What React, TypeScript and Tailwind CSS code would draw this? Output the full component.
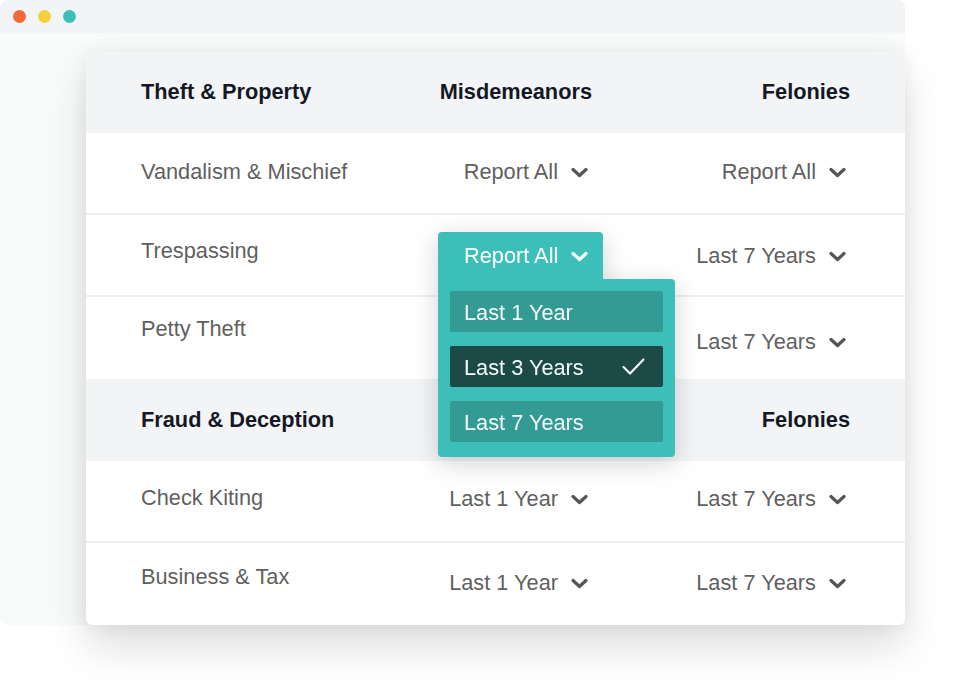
import React from 'react';

const font = { fontFamily: '"Liberation Sans", Arial, sans-serif' };

function Chevron({ white = false }: { white?: boolean }) {
  return (
    <svg width="17" height="11" viewBox="0 0 17 11" className={white ? 'text-white' : 'text-[#555555]'}>
      <path d="M2 2.5l6.5 6 6.5-6" fill="none" stroke="currentColor" strokeWidth="3.2" strokeLinecap="round" strokeLinejoin="round" />
    </svg>
  );
}

function Value({ label }: { label: string }) {
  return (
    <div className="flex items-center justify-end gap-[13px] pr-[4px] text-[21.75px] text-[#5f5f5f]">
      <span>{label}</span>
      <Chevron />
    </div>
  );
}

type Row = { name: string; mis: string | null; fel: string; nameTop: number; valTop: number };

function HeaderRow({ title, first = false }: { title: string; first?: boolean }) {
  return (
    <div className={`grid grid-cols-[1fr_200px_258px] items-center px-[55px] bg-[#f3f4f6] text-[21.75px] font-bold text-[#141824] ${first ? 'h-[81px] rounded-t-[6px]' : 'h-[82px]'}`}>
      <div>{title}</div>
      <div className="text-right">{first ? 'Misdemeanors' : ''}</div>
      <div className="text-right">Felonies</div>
    </div>
  );
}

function DataRow({ row, last = false }: { row: Row; last?: boolean }) {
  return (
    <div className={`grid grid-cols-[1fr_200px_258px] px-[55px] h-[82px] ${last ? '' : 'border-b-2 border-[#f0f0f0]'}`}>
      <div className="text-[21.75px] text-[#5f5f5f] leading-[26px]" style={{ paddingTop: row.nameTop }}>{row.name}</div>
      <div className="leading-[26px]" style={{ paddingTop: row.valTop }}>{row.mis && <Value label={row.mis} />}</div>
      <div className="leading-[26px]" style={{ paddingTop: row.valTop }}><Value label={row.fel} /></div>
    </div>
  );
}

function Dropdown() {
  const items = ['Last 1 Year', 'Last 3 Years', 'Last 7 Years'];
  return (
    <div className="absolute left-[352px] top-[180px] flex flex-col items-start drop-shadow-[0_6px_12px_rgba(0,0,0,0.18)]">
      <div className="flex h-[47px] w-[165px] items-center gap-[13px] rounded-t-[4px] bg-[#3bbfb8] pl-[26px] pt-[1px] text-[21.75px] text-white">
        <span>Report All</span>
        <Chevron white />
      </div>
      <div className="flex w-[237px] flex-col gap-[14px] rounded-b-[4px] rounded-tr-[4px] bg-[#3bbfb8] px-[12px] pt-[12px] pb-[15px]">
        {items.map((it) => (
          <div
            key={it}
            className={`flex h-[41px] items-center justify-between rounded-[2px] pl-[14px] pr-[18px] pt-[3px] text-[21.75px] text-[#f4fbfa] ${it === 'Last 3 Years' ? 'bg-[#1c4a47]' : 'bg-[#339a94]'}`}
          >
            <span>{it}</span>
            {it === 'Last 3 Years' && (
              <svg width="23" height="17" viewBox="0 0 23 17" className="-mt-[3px]">
                <path d="M1.5 9l6.5 6.5L21.5 1.5" fill="none" stroke="white" strokeWidth="2" strokeLinecap="round" strokeLinejoin="round" />
              </svg>
            )}
          </div>
        ))}
      </div>
    </div>
  );
}

export default function App() {
  // the Misdemeanors cells under the open dropdown are hidden in the shot
  const theft: Row[] = [
    { name: 'Vandalism & Mischief', mis: 'Report All', fel: 'Report All', nameTop: 26, valTop: 26 },
    { name: 'Trespassing', mis: null, fel: 'Last 7 Years', nameTop: 23, valTop: 28 },
    { name: 'Petty Theft', mis: null, fel: 'Last 7 Years', nameTop: 19, valTop: 32 },
  ];
  const fraud: Row[] = [
    { name: 'Check Kiting', mis: 'Last 1 Year', fel: 'Last 7 Years', nameTop: 24, valTop: 25 },
    { name: 'Business & Tax', mis: 'Last 1 Year', fel: 'Last 7 Years', nameTop: 21, valTop: 27 },
  ];
  return (
    <div className="h-[681px] w-[960px] bg-white" style={font}>
      <div className="w-[905px] rounded-[8px] bg-[#f9fafa]">
        <div className="flex h-[33px] items-center gap-[12px] rounded-t-[8px] bg-[#f3f4f6] pl-[13px]">
          <span className="h-[13px] w-[13px] rounded-full bg-[#f26a3a]" />
          <span className="h-[13px] w-[13px] rounded-full bg-[#f6d03a]" />
          <span className="h-[13px] w-[13px] rounded-full bg-[#3bc1b9]" />
        </div>
        <div className="pl-[86px] pt-[19px]">
          <div className="relative rounded-[6px] bg-white shadow-[0_22px_40px_rgba(0,0,0,0.13),0_0_18px_rgba(0,0,0,0.06)]">
            <HeaderRow title="Theft & Property" first />
            {theft.map((r) => (
              <DataRow key={r.name} row={r} last={r.name === 'Petty Theft'} />
            ))}
            <HeaderRow title="Fraud & Deception" />
            {fraud.map((r) => (
              <DataRow key={r.name} row={r} last={r.name === 'Business & Tax'} />
            ))}
            <Dropdown />
          </div>
        </div>
      </div>
    </div>
  );
}
